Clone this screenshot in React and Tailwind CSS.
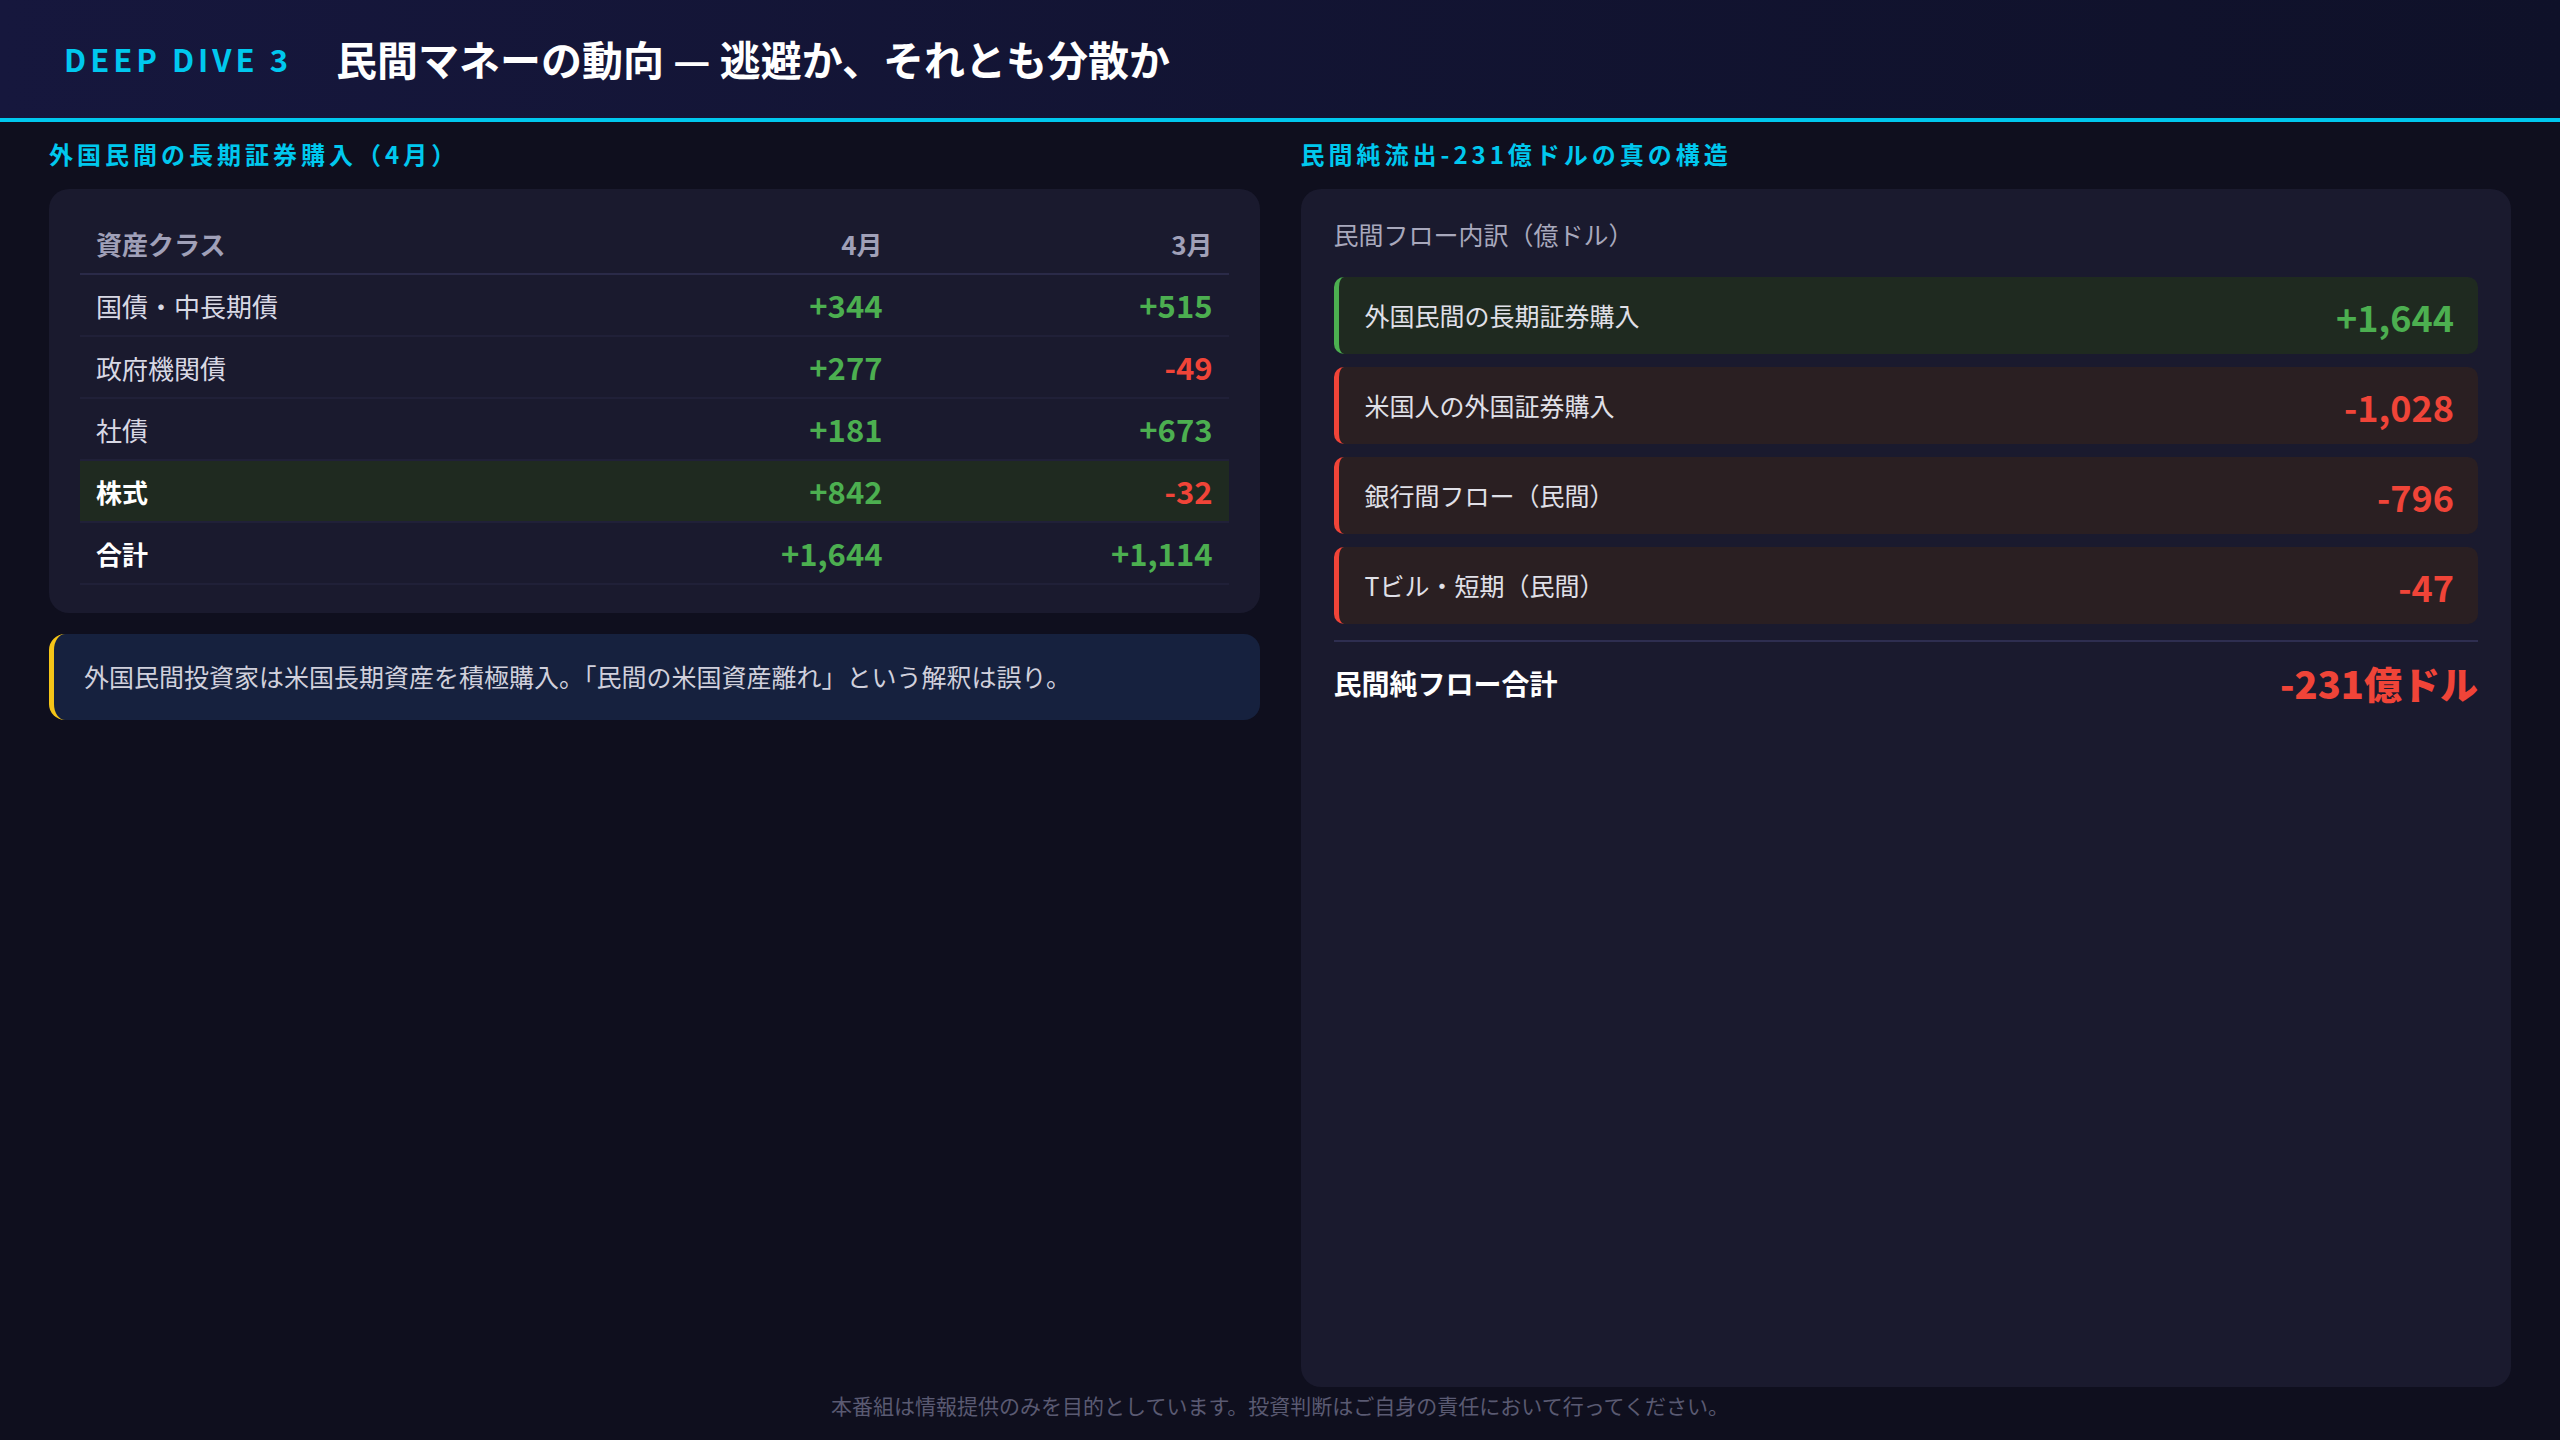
const font = { fontFamily: '"Noto Sans CJK JP", "Noto Sans", sans-serif' }

const rows = [
  { name: '国債・中長期債', apr: '+344', mar: '+515' },
  { name: '政府機関債', apr: '+277', mar: '-49' },
  { name: '社債', apr: '+181', mar: '+673' },
  { name: '株式', apr: '+842', mar: '-32', hi: true },
  { name: '合計', apr: '+1,644', mar: '+1,114', total: true },
]

const flows = [
  { name: '外国民間の長期証券購入', value: '+1,644', pos: true },
  { name: '米国人の外国証券購入', value: '-1,028' },
  { name: '銀行間フロー（民間）', value: '-796' },
  { name: 'Tビル・短期（民間）', value: '-47' },
]

const tone = (v) => (v.startsWith('-') ? 'text-[#f04438]' : 'text-[#4caf50]')

export default function App() {
  return (
    <div className="w-[2560px] h-[1440px] bg-[#0f0f1e] flex flex-col overflow-hidden" style={font}>
      <header className="h-[122px] flex items-center gap-[44px] px-[64px] bg-gradient-to-r from-[#16173d] to-[#0f1129] border-b-4 border-[#00c8ee]">
        <span className="text-[31px] font-bold tracking-[4px] text-[#00c8ee]">DEEP DIVE 3</span>
        <h1 className="text-[41px] font-bold text-white">民間マネーの動向 — 逃避か、それとも分散か</h1>
      </header>

      <div className="flex-1 grid grid-cols-2 gap-[41px] px-[49px] pt-[11px]">
        <section className="flex flex-col">
          <h2 className="text-[24px] font-bold tracking-[4px] text-[#00c8ee] h-[42px] leading-[42px]">外国民間の長期証券購入（4月）</h2>
          <div className="mt-[14px] bg-[#1a1a2e] rounded-[20px] px-[31px] pt-[24px] pb-[28px]">
            <div className="grid grid-cols-[1fr_330px_330px] h-[62px] items-center border-b-2 border-[#2a2a48] text-[26px] font-bold text-[#a0a0b8]">
              <span className="pl-[16px]">資産クラス</span>
              <span className="text-right pr-[16px]">4月</span>
              <span className="text-right pr-[16px]">3月</span>
            </div>
            {rows.map((r) => (
              <div
                key={r.name}
                className={`grid grid-cols-[1fr_330px_330px] h-[62px] items-center border-b-2 border-[#202038] text-[26px] ${r.hi ? 'bg-[#1f2a20]' : ''}`}
              >
                <span className={`pl-[16px] ${r.hi || r.total ? 'font-bold text-white' : 'text-[#d8d8e4]'}`}>{r.name}</span>
                <span className={`text-right pr-[16px] font-bold text-[31px] ${tone(r.apr)}`}>{r.apr}</span>
                <span className={`text-right pr-[16px] font-bold text-[31px] ${tone(r.mar)}`}>{r.mar}</span>
              </div>
            ))}
          </div>
          <div className="mt-[21px] h-[86px] flex items-center bg-[#16213e] rounded-[16px] border-l-[5px] border-[#f5c518] px-[30px] text-[25px] text-[#d0d0dc]">
            外国民間投資家は米国長期資産を積極購入。「民間の米国資産離れ」という解釈は誤り。
          </div>
        </section>

        <section className="flex flex-col">
          <h2 className="text-[24px] font-bold tracking-[4px] text-[#00c8ee] h-[42px] leading-[42px]">民間純流出-231億ドルの真の構造</h2>
          <div className="mt-[14px] h-[1198px] bg-[#1a1a2e] rounded-[20px] px-[33px] pt-[27px]">
            <div className="text-[25px] text-[#a8a8bc] h-[38px]">民間フロー内訳（億ドル）</div>
            <div className="mt-[23px] flex flex-col gap-[13px]">
              {flows.map((f) => (
                <div
                  key={f.name}
                  className={`h-[77px] flex items-center justify-between pl-[26px] pr-[24px] rounded-[10px] border-l-[5px] ${f.pos ? 'bg-[#1f2a20] border-[#4caf50]' : 'bg-[#2a1f22] border-[#f04438]'}`}
                >
                  <span className="text-[25px] text-[#e0e0e8]">{f.name}</span>
                  <span className={`text-[36px] font-bold ${tone(f.value)}`}>{f.value}</span>
                </div>
              ))}
            </div>
            <div className="mt-[16px] border-t-2 border-[#2e2e50] pt-[12px] flex items-center justify-between">
              <span className="text-[28px] font-bold text-white">民間純フロー合計</span>
              <span className="text-[38px] font-black text-[#f04438]">-231億ドル</span>
            </div>
          </div>
        </section>
      </div>

      <footer className="h-[50px] flex items-start justify-center text-[21px] text-[#5a5a72]">
        本番組は情報提供のみを目的としています。投資判断はご自身の責任において行ってください。
      </footer>
    </div>
  )
}
